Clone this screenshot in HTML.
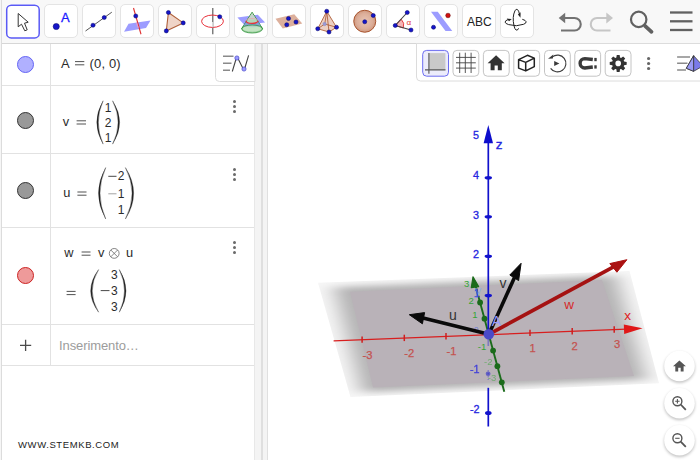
<!DOCTYPE html>
<html><head><meta charset="utf-8">
<style>
*{box-sizing:border-box;margin:0;padding:0}
html,body{width:700px;height:460px;overflow:hidden;background:#fff;font-family:"Liberation Sans",sans-serif;}
#app{position:relative;width:700px;height:460px;overflow:hidden;background:#fff}
#toolbar{position:absolute;left:0;top:0;width:700px;height:43.5px;background:#f8f8f8;border-bottom:1px solid #d6d6d6}
.tb{position:absolute;top:4px;width:34px;height:34px;border:1px solid #e4e4e4;border-radius:5px;background:#fff}
.tb.sel{border:1px solid transparent;}
.tb svg{position:absolute;left:-0.75px;top:-0.5px;width:33px;height:33px}
.tb.sel svg{left:-0.75px;top:-0.5px}
#left{position:absolute;left:0;top:44px;width:255px;height:416px;background:#fff}
.row{position:absolute;left:0;width:255px;border-bottom:1px solid #e2e2e2}
#vline{position:absolute;left:50px;top:0;width:1px;height:321px;background:#e2e2e2}
.mk{position:absolute;left:17px;width:17px;height:17px;border-radius:50%;border:1px solid #333}
.txt{position:absolute;font-size:14px;color:#222;white-space:nowrap}
.dots{position:absolute;left:232px;width:4px}
.dots i{display:block;width:3.2px;height:3.2px;border-radius:50%;background:#6a6a6a;margin-bottom:1.9px}
#split{position:absolute;left:254px;top:44px;width:14px;height:416px;background:#f4f4f4;border-right:1px solid #e0e0e0;border-left:1px solid #e8e8e8}
#split:before{content:"";position:absolute;left:6px;top:0;width:1.5px;height:100%;background:#dfdfdf}
#view{position:absolute;left:268px;top:44px;width:432px;height:416px;background:#fff}
</style></head><body>
<div id="app">
<div id="toolbar">
<div class="tb sel" style="left:6px"><svg viewBox="0 0 33 33" style="overflow:visible"><rect x="0.7" y="0.2" width="32.5" height="32.7" rx="4.5" fill="none" stroke="#5a5af5" stroke-width="1.5"/><polygon points="12.2,8.5 12.2,21.8 15.5,19.2 18.8,25.8 21.2,24.8 18.5,18.2 22.2,17.2" fill="#fff" stroke="#333" stroke-width="1" stroke-linejoin="round"/></svg></div>
<div class="tb" style="left:44px"><svg viewBox="0 0 33 33"><circle cx="12.25" cy="21.5" r="3.1" fill="#1515c8" stroke="#000066" stroke-width="0.5"/><text x="21.3" y="17" font-family="Liberation Sans, sans-serif" font-size="13" fill="#1a1aff" stroke="#1a1aff" stroke-width="0.3" text-anchor="middle">A</text></svg></div>
<div class="tb" style="left:82px"><svg viewBox="0 0 33 33"><line x1="3.5" y1="26" x2="29.8" y2="7.2" stroke="#555" stroke-width="1"/><circle cx="11" cy="20.25" r="2.05" fill="#1515c8" stroke="#000066" stroke-width="0.5"/><circle cx="22.25" cy="12.5" r="2.05" fill="#1515c8" stroke="#000066" stroke-width="0.5"/></svg></div>
<div class="tb" style="left:120px"><svg viewBox="0 0 33 33"><polygon points="4,26.75 26,23 30.5,15.5 8.5,18.75" fill="#9c9cff"/><line x1="13.5" y1="3" x2="21" y2="29.25" stroke="#e03030" stroke-width="1.1"/><line x1="16.5" y1="17.6" x2="18.2" y2="22.8" stroke="#e59ad0" stroke-width="1.2"/><circle cx="15.75" cy="11" r="2.05" fill="#1515c8" stroke="#000066" stroke-width="0.5"/></svg></div>
<div class="tb" style="left:158px"><svg viewBox="0 0 33 33"><polygon points="10.4,7.5 8.3,25.9 25.2,17.9" fill="#efd4c7" stroke="#b0603a" stroke-width="1.1" stroke-linejoin="round"/><circle cx="10.4" cy="7.5" r="2.05" fill="#1515c8" stroke="#000066" stroke-width="0.5"/><circle cx="8.3" cy="25.9" r="2.05" fill="#1515c8" stroke="#000066" stroke-width="0.5"/><circle cx="25.2" cy="17.9" r="2.05" fill="#1515c8" stroke="#000066" stroke-width="0.5"/></svg></div>
<div class="tb" style="left:196px"><svg viewBox="0 0 33 33"><line x1="16.75" y1="3" x2="16.75" y2="29.3" stroke="#777" stroke-width="1.4"/><ellipse cx="16.5" cy="16.25" rx="10.9" ry="6.2" fill="none" stroke="#e8303a" stroke-width="1"/><line x1="16.75" y1="17" x2="16.75" y2="22.2" stroke="#ddd" stroke-width="1.4"/><circle cx="23.75" cy="11.75" r="2.05" fill="#1515c8" stroke="#000066" stroke-width="0.5"/></svg></div>
<div class="tb" style="left:234px"><svg viewBox="0 0 33 33"><polygon points="3.4,12.6 23.8,9.8 31.1,17.6 10,19.6" fill="#9c9cff"/><path d="M18.1,7.3 L7.7,23.6 A10.5,4.2 0 0 0 28.5,23.6 Z" fill="#b4ddb4" fill-opacity="0.9" stroke="#1d8a2a" stroke-width="1" stroke-linejoin="round"/><path d="M12.2,16.3 L9.3,20.9 Q18,23.6 26.9,20.9 L24,16.3 A6,2.7 0 0 1 12.2,16.3 Z" fill="#7895d8" fill-opacity="0.85"/><ellipse cx="18.1" cy="24" rx="10.3" ry="4" fill="#c4e6c4" fill-opacity="0.7" stroke="#1d8a2a" stroke-width="0.7"/><path d="M18.1,7.8 L12.6,15.9 A6,2.4 0 0 1 23.6,15.9 Z" fill="#c9d2cf" fill-opacity="0.85"/><path d="M12.1,15.7 A6,2.7 0 0 0 24.1,15.7" fill="none" stroke="#e8303a" stroke-width="1.2"/><path d="M12.1,15.7 A6,2.2 0 0 1 24.1,15.7" fill="none" stroke="#e8a0a8" stroke-width="0.7"/></svg></div>
<div class="tb" style="left:272px"><svg viewBox="0 0 33 33"><polygon points="3.5,13.75 22.25,9.25 30.25,18.5 10.75,23.5" fill="#ddb09c"/><circle cx="16.5" cy="13.5" r="2.05" fill="#1515c8" stroke="#000066" stroke-width="0.5"/><circle cx="24" cy="17" r="2.05" fill="#1515c8" stroke="#000066" stroke-width="0.5"/><circle cx="14.75" cy="19.75" r="2.05" fill="#1515c8" stroke="#000066" stroke-width="0.5"/></svg></div>
<div class="tb" style="left:310px"><svg viewBox="0 0 33 33"><polygon points="16.75,6.25 7.75,23.75 19,27 26.5,22.25" fill="#ecd0c3" stroke="#b0603a" stroke-width="0.9" stroke-linejoin="round"/><path d="M16.75,6.25 L19,27 M7.75,23.75 L14.75,19 L26.5,22.25 M16.75,6.25 L14.75,19" fill="none" stroke="#a9552f" stroke-width="0.8"/><circle cx="14.6" cy="19" r="1.7" fill="#9a9ad8" stroke="#8888bb" stroke-width="0.5"/><circle cx="16.75" cy="6.25" r="2.05" fill="#1515c8" stroke="#000066" stroke-width="0.5"/><circle cx="7.75" cy="23.75" r="2.05" fill="#1515c8" stroke="#000066" stroke-width="0.5"/><circle cx="19" cy="27" r="2.05" fill="#1515c8" stroke="#000066" stroke-width="0.5"/><circle cx="26.5" cy="22.25" r="2.05" fill="#1515c8" stroke="#000066" stroke-width="0.5"/></svg></div>
<div class="tb" style="left:348px"><svg viewBox="0 0 33 33"><defs><radialGradient id="sg" cx="0.5" cy="0.5" r="0.5"><stop offset="0" stop-color="#e8c4b4"/><stop offset="0.7" stop-color="#dcae99"/><stop offset="1" stop-color="#cf987f"/></radialGradient></defs><circle cx="16.75" cy="16.25" r="11" fill="url(#sg)" stroke="#a9552f" stroke-width="1"/><circle cx="16.75" cy="16.75" r="2.05" fill="#1515c8" stroke="#000066" stroke-width="0.5"/><circle cx="25.25" cy="10.5" r="2.05" fill="#1515c8" stroke="#000066" stroke-width="0.5"/></svg></div>
<div class="tb" style="left:386px"><svg viewBox="0 0 33 33"><path d="M9.25,20.5 L15.2,14.2 A8.5,8.5 0 0 1 17.3,23 Z" fill="#f5b5b5" stroke="#e03030" stroke-width="0.9"/><path d="M21.25,7.5 L9.25,20.5 L25,25" fill="none" stroke="#444" stroke-width="1.1"/><text x="22.7" y="19.5" font-family="Liberation Sans, sans-serif" font-size="8" fill="#e03030" text-anchor="middle">α</text><circle cx="9.25" cy="20.5" r="2.05" fill="#1515c8" stroke="#000066" stroke-width="0.5"/><circle cx="21.25" cy="7.5" r="2.05" fill="#1515c8" stroke="#000066" stroke-width="0.5"/><circle cx="25" cy="25" r="2.05" fill="#1515c8" stroke="#000066" stroke-width="0.5"/></svg></div>
<div class="tb" style="left:424px"><svg viewBox="0 0 33 33"><polygon points="7,6.75 13.75,6.75 28.25,26 21.5,26" fill="#9c9cff"/><circle cx="9.5" cy="22.25" r="2.05" fill="#1515c8" stroke="#000066" stroke-width="0.5"/><circle cx="24" cy="10.5" r="2.3" fill="#d01010" stroke="#660000" stroke-width="0.5"/></svg></div>
<div class="tb" style="left:462px"><svg viewBox="0 0 33 33"><text x="17.3" y="21.2" font-family="Liberation Sans, sans-serif" font-size="12" fill="#222" text-anchor="middle">ABC</text></svg></div>
<div class="tb" style="left:500px"><svg viewBox="0 0 33 33"><g fill="none" stroke="#222" stroke-width="1"><path d="M18.6,23.3 A3.3,10.5 0 1 1 19.5,9.2"/><path d="M22.3,14.3 A10.5,3.5 0 1 1 8,14.6"/></g><polygon points="17.9,9.6 20.6,7.3 20.5,12.8" fill="#222"/><polygon points="6.8,13.5 11.8,14.1 9,16.2" fill="#222"/></svg></div>
<svg style="position:absolute;left:550px;top:0" width="150" height="43" viewBox="550 0 150 43">
<g fill="none" stroke-width="2.1">
<path d="M563,18 H574.5 A6.25,6.25 0 0 1 574.5,30.5 H561" stroke="#727272"/>
<path d="M608.5,18 H597 A6.25,6.25 0 0 0 597,30.5 H610.5" stroke="#c6c6c6"/>
</g>
<polygon points="558.7,18 565.2,12.8 565.2,23.2" fill="#727272"/>
<polygon points="613,18 606.3,12.6 606.3,23.4" fill="#c6c6c6"/>
<circle cx="638.7" cy="19.4" r="7.7" fill="none" stroke="#616161" stroke-width="2.2"/>
<line x1="645" y1="25.8" x2="651.5" y2="31.8" stroke="#616161" stroke-width="3.8" stroke-linecap="round"/>
<g stroke="#616161" stroke-width="2.3"><line x1="670" y1="12.5" x2="692.5" y2="12.5"/><line x1="670" y1="21.3" x2="692.5" y2="21.3"/><line x1="670" y1="30" x2="692.5" y2="30"/></g>
</svg>
</div>
<div id="left">
 <div id="vline"></div>
 <div class="row" style="top:0;height:42px"></div>
 <div class="row" style="top:42px;height:68px"></div>
 <div class="row" style="top:110px;height:74px"></div>
 <div class="row" style="top:184px;height:97px"></div>
 <div class="row" style="top:281px;height:41px"></div>
 <div class="mk" style="top:12px;background:#b0b0ff;border-color:#6464f5"></div>
 <div class="mk" style="top:68px;background:#999;border-color:#333"></div>
 <div class="mk" style="top:138px;background:#999;border-color:#333"></div>
 <div class="mk" style="top:223px;background:#ee9a9a;border-color:#cc2222"></div>
 <div class="txt" style="left:59px;top:294px;color:#9c9c9c;font-size:13px;letter-spacing:-0.1px">Inserimento…</div>
 <div class="txt" style="left:18px;top:395px;font-size:9.5px;letter-spacing:0.6px;color:#222">WWW.STEMKB.COM</div>
 <svg style="position:absolute;left:15px;top:290px" width="22" height="22" viewBox="15 334 22 22"><path d="M20,345.3 H31.2 M25.6,339.7 V350.9" stroke="#4a4a4a" stroke-width="1.3" fill="none"/></svg>
 <div class="dots" style="top:56px;left:232.5px"><i></i><i></i><i></i></div>
 <div class="dots" style="top:124px;left:232.5px"><i></i><i></i><i></i></div>
 <div class="dots" style="top:197px;left:232.5px"><i></i><i></i><i></i></div>
</div>
<svg id="mtx" style="position:absolute;left:0;top:0" width="270" height="460" viewBox="0 0 270 460"><g font-family="Liberation Sans, sans-serif" fill="#2b2b2b"><text x="61" y="67.7" font-size="13">A</text><path d="M75,61.6 H84.3 M75,64.8 H84.3" stroke="#333" stroke-width="0.85" fill="none"/><text x="89.6" y="67.7" font-size="13" letter-spacing="0.15">(0, 0)</text><text x="62.7" y="126.1" font-size="12.8">v</text><path d="M76.6,120.80000000000001 H86 M76.6,124.0 H86" stroke="#333" stroke-width="0.85" fill="none"/><path d="M103.1,100.8 Q90.50,122.45 103.1,144.1 Q93.50,122.45 103.1,100.8 Z" fill="#222" stroke="#222" stroke-width="0.35"/><path d="M112.6,100.8 Q126.60,122.45 112.6,144.1 Q123.60,122.45 112.6,100.8 Z" fill="#222" stroke="#222" stroke-width="0.35"/><text x="108" y="111.6" font-size="12" text-anchor="middle">1</text><text x="108" y="127" font-size="12" text-anchor="middle">2</text><text x="108" y="142.4" font-size="12" text-anchor="middle">1</text><text x="63.3" y="196.7" font-size="12.8">u</text><path d="M77.4,192.0 H86.5 M77.4,195.2 H86.5" stroke="#333" stroke-width="0.85" fill="none"/><path d="M105.7,167.6 Q91.30,193.30 105.7,219 Q94.30,193.30 105.7,167.6 Z" fill="#222" stroke="#222" stroke-width="0.35"/><path d="M125.4,167.6 Q141.80,193.30 125.4,219 Q138.80,193.30 125.4,167.6 Z" fill="#222" stroke="#222" stroke-width="0.35"/><path d="M108.3,176.3 H116.5" stroke="#333" stroke-width="0.9" fill="none"/><text x="121.2" y="180.4" font-size="12" text-anchor="middle">2</text><path d="M108.3,193.8 H116.5" stroke="#999" stroke-width="0.9" fill="none"/><text x="121.2" y="197.9" font-size="12" text-anchor="middle">1</text><text x="121.2" y="214.4" font-size="12" text-anchor="middle">1</text><text x="64.3" y="256.8" font-size="12.8">w</text><path d="M81.6,252.0 H90.5 M81.6,255.2 H90.5" stroke="#333" stroke-width="0.85" fill="none"/><text x="98" y="256.8" font-size="12.8">v</text><g fill="none" stroke="#666" stroke-width="0.8"><circle cx="114.2" cy="253.4" r="4.9"/><path d="M110.8,250 L117.6,256.8 M117.6,250 L110.8,256.8"/></g><text x="126" y="256.8" font-size="12.8">u</text><path d="M66.6,291.4 H75.6 M66.6,294.6 H75.6" stroke="#333" stroke-width="0.85" fill="none"/><path d="M98.6,269.6 Q82.80,290.90 98.6,312.2 Q85.80,290.90 98.6,269.6 Z" fill="#222" stroke="#222" stroke-width="0.35"/><path d="M119.3,269.6 Q132.70,290.90 119.3,312.2 Q129.70,290.90 119.3,269.6 Z" fill="#222" stroke="#222" stroke-width="0.35"/><text x="114.3" y="279.2" font-size="12" text-anchor="middle">3</text><path d="M100.7,290.6 H109.5" stroke="#333" stroke-width="0.9" fill="none"/><text x="114.3" y="294.7" font-size="12" text-anchor="middle">3</text><text x="114.3" y="311.2" font-size="12" text-anchor="middle">3</text></g></svg>
<div id="split"></div><div style="position:absolute;left:0;top:0;width:2px;height:460px;background:#f6f6f6;border-right:1px solid #dcdcdc;box-sizing:border-box"></div>
<div id="view"></div>
<svg id="g3d" style="position:absolute;left:0;top:0" width="700" height="460" viewBox="0 0 700 460">
<defs>
 <filter id="blur6" x="-10%" y="-20%" width="120%" height="140%"><feGaussianBlur stdDeviation="7 2.6"/></filter>
 <clipPath id="planeclip"><polygon points="317,282.5 630,271 659,383 351,397"/></clipPath>
 <filter id="sh" x="-30%" y="-30%" width="160%" height="160%"><feGaussianBlur stdDeviation="1.6"/></filter>
</defs>
<!-- plane -->
<defs><clipPath id="pc"><polygon points="318.0,282.7 629.5,271.0 659.0,383.3 350.5,397.0"/></clipPath><filter id="pb" x="-10%" y="-20%" width="120%" height="140%"><feGaussianBlur stdDeviation="10 3"/></filter></defs>
<g clip-path="url(#pc)"><rect x="300" y="260" width="380" height="150" fill="#f6f6f6"/><polygon points="334.0,287.2 615.8,275.5 646.5,379.6 361.8,392.3" fill="#b3b2b3" filter="url(#pb)"/></g>
<polygon points="350.0,291.8 602.0,280.0 634.0,376.0 373.0,387.6" fill="#b9b2b8"/>
<!-- x axis -->
<line x1="333.6" y1="340.85" x2="626" y2="329.15" stroke="#d81e1e" stroke-width="1.3"/>
<polygon points="642.6,328.3 623.8,324.4 624.2,333.9" fill="#e01818"/>
<g stroke="#d01e1e" stroke-width="1.5"><line x1="362.1" y1="336.4" x2="362.1" y2="342.8"/><line x1="404.3" y1="334.7" x2="404.3" y2="341.1"/><line x1="446" y1="333.1" x2="446" y2="339.5"/><line x1="530" y1="329.7" x2="530" y2="336.1"/><line x1="572.2" y1="328.0" x2="572.2" y2="334.4"/><line x1="614.2" y1="326.3" x2="614.2" y2="332.7"/></g>
<g font-family="Liberation Sans, sans-serif" font-size="11.2" fill="#c4524f" stroke="#c4524f" stroke-width="0.25" text-anchor="middle">
<text x="367.4" y="358.6">-3</text><text x="409.2" y="356.9">-2</text><text x="451.4" y="355.4">-1</text>
<text x="532.6" y="352">1</text><text x="574.6" y="350.4">2</text><text x="617.2" y="348.2">3</text>
</g>
<text x="627.5" y="319.7" font-family="Liberation Sans, sans-serif" font-size="13.5" fill="#e02020" text-anchor="middle">x</text>
<!-- y axis -->
<line x1="475.6" y1="286" x2="504.3" y2="391.7" stroke="#1b6b1b" stroke-width="1.9"/>
<polygon points="473,276.8 471.3,287.6 478.6,286.6" fill="#1b6b1b" stroke="#1b6b1b" stroke-width="1.2" stroke-linejoin="round"/>
<g fill="#1b6b1b"><circle cx="480.1" cy="302.5" r="2.9"/><circle cx="484.5" cy="318.7" r="2.9"/><circle cx="493.1" cy="350.6" r="2.9"/><circle cx="497.4" cy="366.2" r="2.9"/><circle cx="501.8" cy="382.3" r="2.9"/></g>
<g font-family="Liberation Sans, sans-serif" font-size="9.5" fill="#35a535" text-anchor="middle">
<text x="466.7" y="286.6">3</text><text x="471.1" y="303.6">2</text><text x="475" y="317.7">1</text><text x="476.2" y="332" font-size="8" fill="#6a7ad8">0</text>
<text x="482" y="350.4">-1</text><text x="488.3" y="364.6" opacity="0.55">-2</text><text x="492" y="381.4" opacity="0.55">-3</text>
<text x="478.2" y="294.5" font-size="12" fill="#8fb0e8">y</text>
</g>
<!-- z axis -->
<line x1="488.3" y1="140" x2="488.3" y2="338" stroke="#1111cc" stroke-width="1.7"/><line x1="488.3" y1="338" x2="488.3" y2="346" stroke="#1111cc" stroke-width="1.7" opacity="0.35"/><line x1="488.3" y1="387.8" x2="488.3" y2="426.5" stroke="#1111cc" stroke-width="1.7"/>
<polygon points="488.3,125 483.6,143.3 493,143.3" fill="#0d0dcc"/>
<g fill="#1111cc">
<ellipse cx="488.3" cy="177.7" rx="3.7" ry="1.8"/><ellipse cx="488.3" cy="216.8" rx="3.7" ry="1.8"/><ellipse cx="488.3" cy="256.3" rx="3.7" ry="1.8"/>
<ellipse cx="488.3" cy="295.6" rx="3.7" ry="1.8"/><ellipse cx="488.1" cy="373.8" rx="2.4" ry="2.2" opacity="0.5"/><line x1="488.2" y1="370" x2="488.2" y2="380" stroke="#1111cc" stroke-width="1.2" stroke-dasharray="1.5 1.5" opacity="0.35"/><ellipse cx="488.3" cy="412.9" rx="3.3" ry="2"/>
</g>
<g font-family="Liberation Sans, sans-serif" font-size="10.8" fill="#2525e0" stroke="#2525e0" stroke-width="0.3" text-anchor="middle">
<text x="476" y="139">5</text><text x="476" y="179">4</text><text x="476" y="218.5">3</text><text x="476" y="257.5">2</text>
<text x="477" y="297" opacity="0.7">1</text><text x="474.8" y="373" opacity="0.8">-1</text><text x="474.8" y="413.3">-2</text>
<text x="499.2" y="149" font-size="13.5">z</text>
</g>
<!-- vectors -->
<line x1="488.8" y1="334.3" x2="614" y2="266.6" stroke="#a51212" stroke-width="3.7"/>
<polygon points="626.9,259.7 609.8,263.6 616.9,272.2" fill="#ab1212" stroke="#ab1212" stroke-width="1" stroke-linejoin="round"/>
<line x1="488.8" y1="334.3" x2="422" y2="317.8" stroke="#0a0a0a" stroke-width="3.6"/>
<polygon points="409.3,314.7 424.6,312.6 422.4,323.8" fill="#0a0a0a" stroke="#0a0a0a" stroke-width="1" stroke-linejoin="round"/>
<line x1="488.8" y1="334.3" x2="514.5" y2="277.5" stroke="#0a0a0a" stroke-width="3.6"/>
<polygon points="521.1,263.3 509.8,275 518.6,280.6" fill="#0a0a0a" stroke="#0a0a0a" stroke-width="1" stroke-linejoin="round"/>
<circle cx="488.8" cy="334.3" r="5.3" fill="#4a4ac8"/>
<g font-family="Liberation Sans, sans-serif" font-size="13" text-anchor="middle">
<text x="453" y="320" fill="#333" font-size="14">u</text><text x="503" y="287.7" fill="#333" font-size="14">v</text><text x="569" y="309" fill="#d62a2a" font-size="13.5">w</text>
<text x="496.3" y="326.4" fill="#9a9aff" font-size="14">A</text>
</g>
<!-- round buttons -->
<g>
<circle cx="679.5" cy="367.5" r="15.3" fill="#000" opacity="0.25" filter="url(#sh)"/><circle cx="679.5" cy="366" r="15.3" fill="#fff"/>
<circle cx="679.5" cy="404.8" r="15.3" fill="#000" opacity="0.25" filter="url(#sh)"/><circle cx="679.5" cy="403.3" r="15.3" fill="#fff"/>
<circle cx="679.5" cy="441.8" r="15.3" fill="#000" opacity="0.25" filter="url(#sh)"/><circle cx="679.5" cy="440.3" r="15.3" fill="#fff"/>
</g>
<g id="stylebar"><path d="M416.5,43.5 V77 A4,4 0 0 0 420.5,81 H701 V43.5 Z" fill="#fff" stroke="#dcdcdc" stroke-width="1"/><rect x="422.7" y="50.4" width="25.8" height="25.8" rx="4" fill="#ececfb" stroke="#6c6cf0" stroke-width="1"/><rect x="453.0" y="50.4" width="25.8" height="25.8" rx="4" fill="#fff" stroke="#bdbdbd" stroke-width="0.9"/><rect x="483.4" y="50.4" width="25.8" height="25.8" rx="4" fill="#fff" stroke="#bdbdbd" stroke-width="0.9"/><rect x="513.8" y="50.4" width="25.8" height="25.8" rx="4" fill="#fff" stroke="#bdbdbd" stroke-width="0.9"/><rect x="544.5" y="50.4" width="25.8" height="25.8" rx="4" fill="#fff" stroke="#bdbdbd" stroke-width="0.9"/><rect x="574.8" y="50.4" width="25.8" height="25.8" rx="4" fill="#fff" stroke="#bdbdbd" stroke-width="0.9"/><rect x="605.1999999999999" y="50.4" width="25.8" height="25.8" rx="4" fill="#fff" stroke="#bdbdbd" stroke-width="0.9"/><rect x="428.9" y="53.1" width="16.5" height="16.8" fill="#c9c9c9"/><path d="M428.9,53 V73.8 M425,69.9 H445.5" stroke="#555" stroke-width="1.1" fill="none"/><path d="M459.7,52.7 V73 M465.3,52.7 V73 M471.1,52.7 V73 M456,57.4 H475.8 M456,62.8 H475.8 M456,68.1 H475.8" stroke="#444" stroke-width="0.9" fill="none"/><path d="M496.1,55.2 L487.6,63.2 H490.6 V70.2 H494.6 V65.4 H497.8 V70.2 H501.8 V63.2 H504.6 Z" fill="#333"/><path d="M518.6,59.6 L527.4,55.3 L534.3,58.1 V66.6 L525.7,70.9 L518.6,68.1 Z M518.6,59.6 L525.7,62.4 L534.3,58.1 M525.7,62.4 V70.9" fill="none" stroke="#222" stroke-width="1.5" stroke-linejoin="round"/><path d="M552.33,56.88 A8.4,8.4 0 1 1 550.62,68.32" fill="none" stroke="#3a3a3a" stroke-width="1.15"/><polygon points="548,58.8 553.3,54.4 552.9,58.4" fill="#3a3a3a"/><polygon points="554.2,61 554.2,66.1 559.4,63.5" fill="#3a3a3a"/><path d="M592.8,59.5 L584.8,58.6 A4.7,4.7 0 0 0 584.8,68 L592.8,67" fill="none" stroke="#3a3a3a" stroke-width="3.4"/><rect x="594.3" y="57.9" width="2.4" height="3.3" fill="#3a3a3a"/><rect x="594.3" y="65.3" width="2.4" height="3.3" fill="#3a3a3a"/><path d="M624.12,61.57 L626.68,61.95 L626.68,64.85 L624.12,65.23 L623.68,66.29 L625.22,68.36 L623.16,70.42 L621.09,68.88 L620.03,69.32 L619.65,71.88 L616.75,71.88 L616.37,69.32 L615.31,68.88 L613.24,70.42 L611.18,68.36 L612.72,66.29 L612.28,65.23 L609.72,64.85 L609.72,61.95 L612.28,61.57 L612.72,60.51 L611.18,58.44 L613.24,56.38 L615.31,57.92 L616.37,57.48 L616.75,54.92 L619.65,54.92 L620.03,57.48 L621.09,57.92 L623.16,56.38 L625.22,58.44 L623.68,60.51 Z M621.0,63.4 A2.8,2.8 0 1 0 615.4000000000001,63.4 A2.8,2.8 0 1 0 621.0,63.4 Z" fill="#333" fill-rule="evenodd"/><circle cx="648.6" cy="58.5" r="1.6" fill="#666"/><circle cx="648.6" cy="63.5" r="1.6" fill="#666"/><circle cx="648.6" cy="68.5" r="1.6" fill="#666"/><path d="M677.1,56.9 H690 M677.1,63.3 H687.5 M677.1,70.1 H686" stroke="#8a8a8a" stroke-width="1.5" fill="none"/><path d="M693.6,55.7 L686.3,68.3 L693.6,71.3 L703,66 Z" fill="#7a7aea" stroke="#333" stroke-width="0.8" stroke-linejoin="round"/><path d="M693.6,55.7 V71.3" stroke="#333" stroke-width="0.8"/><path d="M693.6,55.7 L686.3,68.3 L693.6,71.3 Z" fill="#9a9af5" stroke="#333" stroke-width="0.8" stroke-linejoin="round"/></g><path d="M255,43.5 H215.5 V77.5 A4,4 0 0 0 219.5,81.5 H255 Z" fill="#fff" stroke="#dcdcdc" stroke-width="1"/><path d="M223,56.2 H233.5 M223,63.2 H231.5 M223,70.3 H230" stroke="#8a8a8a" stroke-width="1.5" fill="none"/><path d="M232.3,71.5 L236.5,57.5 Q237.2,56.5 238,58.5 L243,68.5 Q244,70.5 244.7,68.5 L248.6,55.3" fill="none" stroke="#444" stroke-width="1.1"/><circle cx="236.9" cy="58" r="2.1" fill="#9a9aff" stroke="#4a4acc" stroke-width="0.7"/><circle cx="244" cy="69" r="2.1" fill="#9a9aff" stroke="#4a4acc" stroke-width="0.7"/><path d="M679.4,360.6 L673,366.3 H675.3 V371.4 H678.2 V367.8 H680.7 V371.4 H683.6 V366.3 H685.9 Z" fill="#555"/><g fill="none" stroke="#555" stroke-width="1.4"><circle cx="677.4" cy="401.2" r="4.5"/><path d="M680.7,404.5 L685.8,409.8" stroke-width="1.8"/><path d="M675.2,401.2 H679.6 M677.4,399 V403.4" stroke-width="1.1"/><circle cx="677.4" cy="438.3" r="4.5"/><path d="M680.7,441.6 L685.8,446.9" stroke-width="1.8"/><path d="M675.2,438.3 H679.6" stroke-width="1.1"/></g></svg>
</div>
</body></html>
